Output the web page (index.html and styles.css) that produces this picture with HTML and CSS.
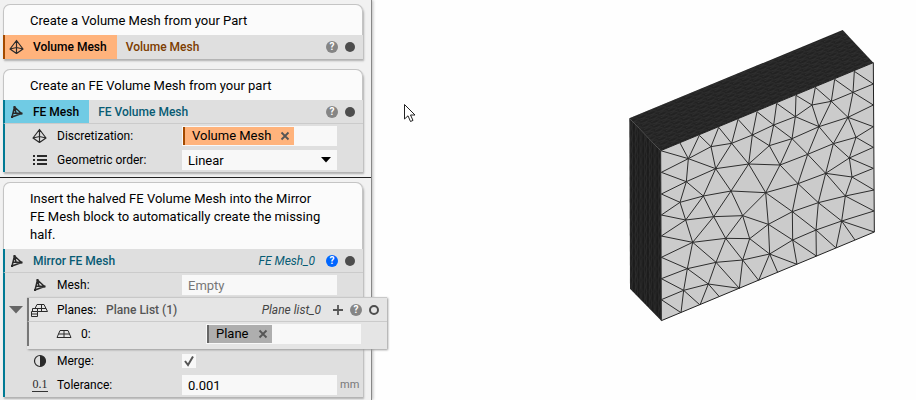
FILE: index.html
```
<!DOCTYPE html>
<html lang="en">
<head>
    <meta charset="UTF-8">
    <meta name="viewport" content="width=device-width, initial-scale=1.0">
    <title>Mirror FE Mesh</title>
    <link rel="stylesheet" href="styles.css">
</head>
<body>
    <!-- Shared icons -->
    <svg class="defs" aria-hidden="true">
        <symbol id="i-volume" viewBox="0 0 16 16">
            <path d="M7.500 1.500L1 10L7.500 14.500L14 10ZM7.500 1.500V14.500M1 10L7.500 8.500L14 10" fill="none" stroke="currentColor" stroke-width="1.200" stroke-linejoin="round"/>
        </symbol>
        <symbol id="i-mesh" viewBox="0 0 16 16">
            <path d="M5.500 3L3 13L12.500 9.500ZM4 9L12.500 9.500M5.500 3L7 9" fill="none" stroke="currentColor" stroke-width="1.500" stroke-linejoin="round"/>
            <path d="M4.500 2h2v2h-2zM2 12h2v2h-2zM11.500 8.500h2v2h-2z" fill="currentColor"/>
        </symbol>
        <symbol id="i-list" viewBox="0 0 16 16">
            <path d="M1 4h2M1 8h2M1 12h2M5 4h10M5 8h10M5 12h10" stroke="currentColor" stroke-width="1.800"/>
        </symbol>
        <symbol id="i-plane" viewBox="0 0 16 16">
            <path d="M4 4.500H12L15 11.500H1ZM2.500 8H13.500M8 4.500V11.500" fill="none" stroke="currentColor"/>
        </symbol>
        <symbol id="i-planes" viewBox="0 0 20 16">
            <path d="M6 2.500H13L16.500 9.500H7M6 2.500L4 6.500H15M10.500 2.500V9.500M0.500 9.500V14.500H6.500V9.500ZM0.500 12H6.500M1.500 9.500V6.500H6.500V9.500" fill="none" stroke="currentColor"/>
        </symbol>
        <symbol id="i-merge" viewBox="0 0 16 16">
            <circle cx="8" cy="8" r="5.500" fill="none" stroke="currentColor" stroke-width="1.200"/>
            <path d="M8 2.500a5.500 5.500 0 0 1 0 11z" fill="currentColor"/>
        </symbol>
        <symbol id="i-close" viewBox="0 0 10 10">
            <path d="M1.500 1.500L8.500 8.500M8.500 1.500L1.500 8.500" stroke="currentColor" stroke-width="1.800"/>
        </symbol>
        <symbol id="i-plus" viewBox="0 0 12 12">
            <path d="M6 1V11M1 6H11" stroke="currentColor" stroke-width="1.800"/>
        </symbol>
    </svg>

    <div class="app">
        <aside class="notebook">
            <section class="block orange">
                <p class="note">Create a Volume Mesh from your Part</p>
                <div class="block-head">
                    <span class="tab"><svg class="icon"><use href="#i-volume"/></svg>Volume Mesh</span>
                    <span class="type">Volume Mesh</span>
                    <button type="button" class="help" aria-label="Help">?</button>
                    <button type="button" class="dot" aria-label="Visibility"></button>
                </div>
            </section>

            <section class="block blue">
                <p class="note">Create an FE Volume Mesh from your part</p>
                <div class="block-head">
                    <span class="tab"><svg class="icon"><use href="#i-mesh"/></svg>FE Mesh</span>
                    <span class="type">FE Volume Mesh</span>
                    <button type="button" class="help" aria-label="Help">?</button>
                    <button type="button" class="dot" aria-label="Visibility"></button>
                </div>
                <div class="row">
                    <svg class="icon"><use href="#i-volume"/></svg>
                    <span class="label">Discretization:</span>
                    <div class="field">
                        <span class="chip chip-orange">Volume Mesh<button type="button" aria-label="Remove"><svg><use href="#i-close"/></svg></button></span>
                    </div>
                </div>
                <div class="row">
                    <svg class="icon"><use href="#i-list"/></svg>
                    <label class="label" for="order">Geometric order:</label>
                    <div class="field">
                        <select id="order"><option>Linear</option><option>Quadratic</option></select>
                        <svg class="arrow" viewBox="0 0 10 6"><path d="M0 0H10L5 5.500Z"/></svg>
                    </div>
                </div>
            </section>

            <hr class="divider">

            <section class="block blue">
                <p class="note">Insert the halved FE Volume Mesh into the Mirror FE Mesh block to automatically create the missing half.</p>
                <div class="block-head">
                    <span class="tab plain"><svg class="icon"><use href="#i-mesh"/></svg>Mirror FE Mesh</span>
                    <em class="var">FE Mesh_0</em>
                    <button type="button" class="help active" aria-label="Help">?</button>
                    <button type="button" class="dot" aria-label="Visibility"></button>
                </div>
                <div class="row">
                    <svg class="icon"><use href="#i-mesh"/></svg>
                    <label class="label" for="mesh">Mesh:</label>
                    <div class="field"><input type="text" id="mesh" placeholder="Empty"></div>
                </div>
                <div class="list-row">
                    <button type="button" class="toggle" aria-label="Collapse"><svg viewBox="0 0 14 8"><path d="M0 0H14L7 7.500Z"/></svg></button>
                    <div class="list">
                        <div class="list-head">
                            <svg class="icon icon-wide"><use href="#i-planes"/></svg>
                            <span class="label">Planes:</span>
                            <span class="list-type">Plane List (1)</span>
                            <em class="var">Plane list_0</em>
                            <button type="button" class="add" aria-label="Add"><svg><use href="#i-plus"/></svg></button>
                            <button type="button" class="help" aria-label="Help">?</button>
                            <button type="button" class="dot hollow" aria-label="Visibility"></button>
                        </div>
                        <div class="row">
                            <svg class="icon"><use href="#i-plane"/></svg>
                            <span class="label">0:</span>
                            <div class="field">
                                <span class="chip chip-gray">Plane<button type="button" aria-label="Remove"><svg><use href="#i-close"/></svg></button></span>
                            </div>
                        </div>
                    </div>
                </div>
                <div class="row">
                    <svg class="icon"><use href="#i-merge"/></svg>
                    <label class="label" for="merge">Merge:</label>
                    <span class="check">
                        <input type="checkbox" id="merge" checked>
                        <svg viewBox="0 0 14 14"><path d="M3 7L6 11L11 2.500"/></svg>
                    </span>
                </div>
                <div class="row">
                    <span class="icon decimal">0.1</span>
                    <label class="label" for="tolerance">Tolerance:</label>
                    <div class="field"><input type="text" id="tolerance" value="0.001"></div>
                    <span class="unit">mm</span>
                </div>
            </section>
        </aside>

        <main class="viewport">
            <svg class="cursor" viewBox="0 0 13 20"><path d="M1.500 1.500V16L5 12.800L7.500 18.500L10 17.400L7.500 12H12Z"/></svg>
            <svg class="part" viewBox="0 0 795 930">
                <defs>
                    <pattern id="fineTop" width="30" height="14" patternUnits="userSpaceOnUse" patternTransform="rotate(-22)">
                        <path d="M0 3L14 5L30 2M3 10L18 8L30 12" fill="none" stroke="#3c3c3c" stroke-width="1.500"/>
                    </pattern>
                    <pattern id="fineSide" width="14" height="34" patternUnits="userSpaceOnUse">
                        <path d="M3 0L5 15L3 34M10 0L8 20L11 34" fill="none" stroke="#3c3c3c" stroke-width="1.500"/>
                    </pattern>
                </defs>
                <path d="M28 295L668 30L760 128L122 392Z" fill="#222"/>
                <path d="M28 295L668 30L760 128L122 392Z" fill="url(#fineTop)"/>
                <path d="M28 295L122 392L124 902L30 806Z" fill="#1c1c1c"/>
                <path d="M28 295L122 392L124 902L30 806Z" fill="url(#fineSide)"/>
                <path class="face" d="M122 392L760 128L763 636L124 902Z"/>
                <!-- top rows of elements -->
                <path class="edge" d="M122 392L205 416L180 369M124 457L205 416L238 346L273 380L296 322L335 370L354 298L397 345L411 275L461 315L470 250L526 290L528 226L576 255L586 202L634 244L644 178L699 217L703 154L760 192L699 217L760 255"/>
                <path class="edge" d="M205 416L273 380L335 370L397 345L461 315L526 290L576 255L634 244L699 217L684 292L634 244L597 320L576 255M526 290L597 320L684 292L760 255M684 292L760 320L708 352L684 292"/>
                <path class="edge" d="M205 416L287 446L273 380M287 446L335 370L386 432L397 345L448 377L461 315L516 356L526 290M287 446L386 432L448 377L516 356L597 320L563 403L516 356L480 435L448 377M386 432L480 435L563 403L640 371L708 352L760 382L688 414L708 352M597 320L640 371L684 292M640 371L688 414L760 445L696 471L688 414L617 460L640 371M563 403L617 460L696 471"/>
                <!-- middle rows -->
                <path class="edge" d="M205 416L199 485L124 457M287 446L199 485L124 522L180 547L199 485L250 528L287 446L333 513L386 432L437 518L480 435L534 491L563 403M534 491L617 460L595 548L534 491L517 575L437 518M617 460L676 528L696 471L762 510L676 528L762 573"/>
                <path class="edge" d="M180 547L250 528L333 513L437 518L534 491M517 575L595 548L676 528L665 603L595 548L588 630L517 575M124 585L180 547L197 600L250 528L281 590L333 513L368 587L437 518L445 613L517 575L518 660"/>
                <path class="edge" d="M124 585L197 600L281 590L368 587L445 613L518 660L588 630L665 603L762 573M665 603L763 636M124 648L197 600L218 667L281 590L317 655L368 587L389 656L445 613L449 702"/>
                <!-- bottom rows -->
                <path class="edge" d="M124 648L218 667L317 655L389 656L449 702L518 660L531 733L449 702L473 757M449 702L416 781L368 720L389 656M518 660L589 708L588 630L648 684L665 603L705 660"/>
                <path class="edge" d="M124 712L218 667L202 746L124 712M218 667L288 727L317 655L368 720L449 702M124 776L202 746L288 727L368 720L358 805L288 727L265 792L202 746L191 811L124 776M124 839L191 811L265 792L358 805M265 792L298 830M265 792L240 855L191 811L183 878L124 839"/>
            </svg>
        </main>
    </div>
</body>
</html>
```
FILE: styles.css
```
* {
    box-sizing: border-box;
}
body {
    margin: 0;
    font-family: Roboto, Arial, sans-serif;
    font-size: 13px;
    line-height: 18px;
    color: #000;
    background: #fefefe;
}
button {
    padding: 0;
    border: none;
    background: none;
    font-family: inherit;
    cursor: pointer;
}
svg {
    display: block;
}
.defs {
    display: none;
}
.app {
    display: flex;
    min-height: 100vh;
}

/* Left panel */
.notebook {
    flex: 0 0 372px;
    position: relative;
    z-index: 1;
    padding: 4px 8px 3px 3px;
    background: #f1f1f1;
    border-right: 1px solid #888;
    box-shadow: 1px 0 3px #bbb;
}
.block {
    margin-bottom: 10px;
    background: #dfdfdf;
    border-radius: 7px 7px 0 0;
    box-shadow: 1px 2px 2px #b0b0b0;
}
.block:last-child {
    margin-bottom: 0;
}
.note {
    margin: 0;
    padding: 7px 38px 5px 26px;
    border: 1px solid #c4c4c4;
    border-bottom: none;
    border-radius: 7px 7px 0 0;
    background: #fbfbfb;
}
.divider {
    margin: -5px -8px 4px -3px;
    border: none;
    border-top: 1px solid #222;
}
.block-head,
.row,
.list-head {
    display: flex;
    align-items: center;
    height: 24px;
}
.block-head {
    padding-right: 8px;
    border-bottom: 1px solid #cbcbcb;
    font-size: 12px;
}
.orange .block-head {
    border-left: 2px solid #a34a00;
    border-bottom: none;
    color: #7c3c00;
}
.blue .block-head,
.blue > .row,
.list-row {
    border-left: 2px solid #007a94;
}
.blue .block-head {
    color: #075b74;
}
.tab {
    display: flex;
    align-items: center;
    align-self: stretch;
    gap: 8px;
    margin-right: 9px;
    padding: 0 10px 0 4px;
    font-weight: 500;
    color: #000;
}
.orange .tab {
    background: #ffb37c;
}
.blue .tab {
    background: #70cbe4;
}
.blue .plain {
    background: none;
    color: #075b74;
}
.type {
    font-weight: 500;
}
.icon {
    flex: none;
    width: 16px;
    height: 16px;
    color: #2a2a2a;
}
.var {
    margin-left: auto;
    font-size: 12px;
}
.help {
    width: 12px;
    height: 12px;
    margin-left: auto;
    border-radius: 50%;
    background: #858585;
    color: #fff;
    font-size: 10px;
    font-weight: 700;
    line-height: 12px;
}
.var ~ .help {
    margin-left: 11px;
}
.help.active {
    background: #0066ff;
}
.dot {
    width: 10px;
    height: 10px;
    margin-left: 7px;
    border-radius: 50%;
    background: #4d4d4d;
}
.hollow {
    background: none;
    border: 2px solid #4d4d4d;
}

/* Input rows */
.row {
    padding-left: 27px;
}
.label {
    width: 134px;
    padding-left: 9px;
    font-size: 12px;
}
.field {
    display: flex;
    align-items: center;
    position: relative;
    width: 155px;
    height: 20px;
    background: #f8f8f8;
}
.field input,
.field select {
    width: 100%;
    height: 20px;
    padding: 0 6px;
    border: none;
    background: none;
    color: #000;
    font-family: inherit;
    font-size: 13px;
    appearance: none;
}
.field input::placeholder {
    color: #777;
}
.arrow {
    position: absolute;
    right: 6px;
    width: 10px;
    height: 6px;
    pointer-events: none;
}
.chip {
    display: flex;
    align-items: center;
    gap: 9px;
    height: 18px;
    margin-left: 1px;
    padding: 0 4px 0 7px;
    border-left: 2px solid #a34a00;
    background: #ffb37c;
}
.chip svg {
    width: 10px;
    height: 10px;
    color: #555;
}
.chip-gray {
    border-color: #666;
    background: #aeaeae;
}
.unit {
    padding-left: 3px;
    font-size: 11px;
    color: #777;
}
.decimal {
    height: 14px;
    border-bottom: 1px solid #333;
    font-family: "Liberation Serif", serif;
    font-size: 12px;
    line-height: 12px;
    text-align: center;
}
.check {
    display: grid;
    width: 14px;
    height: 14px;
}
.check input,
.check svg {
    grid-area: 1 / 1;
    width: 14px;
    height: 14px;
    margin: 0;
}
.check input {
    appearance: none;
    background: #f8f8f8;
}
.check svg {
    fill: none;
    stroke: #555;
    stroke-width: 2;
    pointer-events: none;
}
.check input:not(:checked) + svg {
    visibility: hidden;
}

/* Open plane list, wider than the panel */
.list-row {
    display: flex;
    align-items: flex-start;
    margin-right: -24px;
}
.toggle {
    width: 14px;
    margin: 9px 4px 0 4px;
}
.toggle svg {
    width: 14px;
    height: 8px;
    fill: #666;
}
.list {
    flex: 1;
    position: relative;
    height: 52px;
    background: #e5e5e5;
    border-top: 1px solid #c8c8c8;
    box-shadow: 1px 1px 2px #999;
}
.list-head,
.list .row {
    border-left: 2px solid #777;
}
.list-head {
    padding-left: 2px;
    padding-right: 8px;
    border-bottom: 1px solid #cbcbcb;
}
.list-head .icon-wide {
    width: 20px;
}
.list-head .label {
    width: auto;
    padding-left: 6px;
}
.list-type {
    padding-left: 10px;
    font-size: 12px;
    font-weight: 500;
    color: #555;
}
.list .var {
    color: #444;
}
.add {
    margin-left: 11px;
    color: #555;
}
.add svg {
    width: 12px;
    height: 12px;
}
.list .add ~ .help {
    margin-left: 6px;
}

/* 3D view */
.viewport {
    flex: 1;
    display: flex;
    justify-content: flex-end;
    align-items: flex-start;
    position: relative;
    padding: 20px 31px 0 0;
}
.cursor {
    position: absolute;
    left: 31px;
    top: 103px;
    width: 13px;
    height: 20px;
    fill: #fff;
    stroke: #222;
}
.part {
    width: 265px;
    height: 310px;
}
.face {
    fill: #cbcbcb;
    stroke: #222;
    stroke-width: 3;
}
.edge {
    fill: none;
    stroke: #2c2c2c;
    stroke-width: 3;
}
```
